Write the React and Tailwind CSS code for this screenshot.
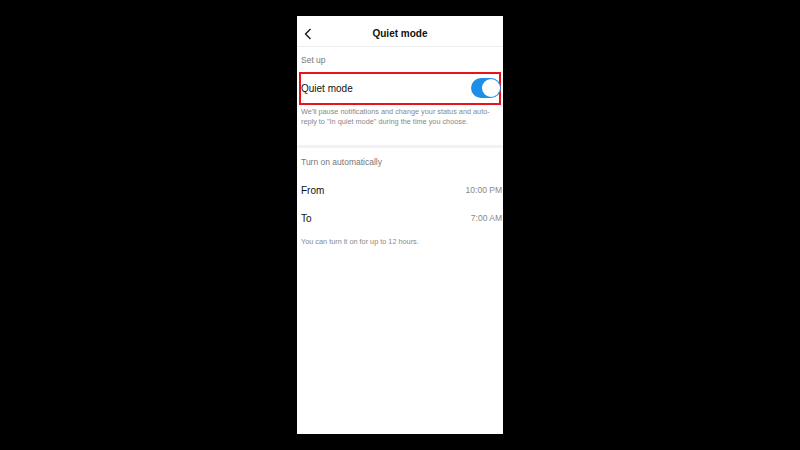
export default function App() {
  return (
    <div className="w-[800px] h-[450px] bg-black flex justify-center pt-[16px]" style={{ fontFamily: '"Liberation Sans", Arial, sans-serif' }}>
      <div className="w-[206px] h-[418px] bg-white flex flex-col">
        <div className="h-[31px] border-b border-[#eeeeee] flex items-center relative pt-[4px]">
          <svg className="absolute left-[6px] top-[12px]" width="10" height="12" viewBox="0 0 10 12" fill="none">
            <path d="M7.5 1 L2.5 6 L7.5 11" stroke="#111" strokeWidth="1.3" />
          </svg>
          <div className="w-full text-center text-[10px] font-bold text-[#111]">Quiet mode</div>
        </div>
        <div className="px-[4px] pt-[9px] text-[8.5px] text-[#777] leading-none">Set up</div>
        <div className="mt-[7px] mx-[2px] h-[33px] border-2 border-[#e8141b] flex items-center justify-between">
          <span className="text-[10px] text-[#111]">Quiet mode</span>
          <div className="w-[30px] h-[20px] rounded-full bg-[#1d8fe8] relative mr-[-2px]">
            <div className="absolute right-[1px] top-[1px] w-[18px] h-[18px] rounded-full bg-white" />
          </div>
        </div>
        <div className="px-[4px] pt-[2px] text-[7.3px] leading-[10px] text-[#888]">
          We'll pause notifications and change your status and auto-reply to "In quiet mode" during the time you choose.
        </div>
        <div className="mt-[18px] h-[3px] bg-[#f2f2f2]" />
        <div className="px-[4px] pt-[10px] text-[8.5px] text-[#777] leading-none">Turn on automatically</div>
        <div className="flex justify-between items-center px-[4px] h-[28px] mt-[10px]">
          <span className="text-[10px] text-[#111]">From</span>
          <span className="text-[8.5px] text-[#888] mr-[-3px]">10:00 PM</span>
        </div>
        <div className="flex justify-between items-center px-[4px] h-[28px]">
          <span className="text-[10px] text-[#111]">To</span>
          <span className="text-[8.5px] text-[#888] mr-[-3px]">7:00 AM</span>
        </div>
        <div className="px-[4px] pt-[6px] text-[7.3px] text-[#888] leading-none">You can turn it on for up to 12 hours.</div>
      </div>
    </div>
  );
}
